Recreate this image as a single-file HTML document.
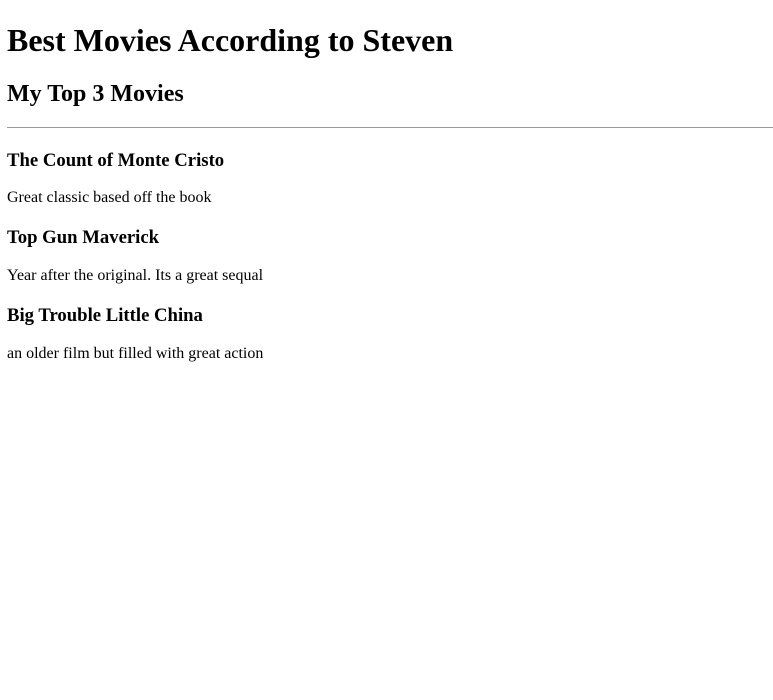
<!DOCTYPE html>
<html><head><meta charset="utf-8"><style>
body{margin:0 0 0 7px;padding-top:1px;font-family:"Liberation Serif",serif;font-size:16px;color:#000;background:#fff}
h1{font-size:32px;margin:21px 0 22px}
h2{font-size:24px;margin:20px 0 19px}
h3{font-size:18.72px;margin:20px 0 17px}
h3.first{margin-top:22px}
p{margin:16px 0}
hr{border:0;border-top:1px solid #999;margin:8px 0}
</style></head><body>
<h1>Best Movies According to Steven</h1>
<h2>My Top 3 Movies</h2>
<hr>
<h3 class="first">The Count of Monte Cristo</h3>
<p>Great classic based off the book</p>
<h3>Top Gun Maverick</h3>
<p style="margin-top:18px">Year after the original. Its a great sequal</p>
<h3>Big Trouble Little China</h3>
<p style="margin-top:18px">an older film but filled with great action</p>
</body></html>
